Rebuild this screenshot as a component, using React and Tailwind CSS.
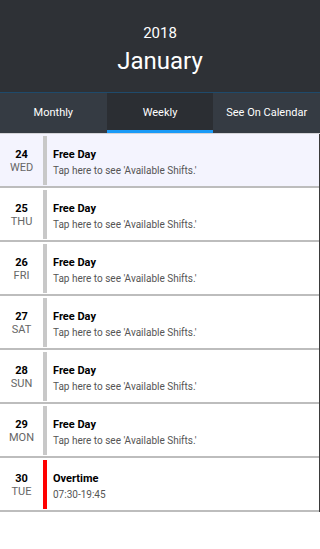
import React from "react";

const days = [
  { d: "24", w: "WED", title: "Free Day", sub: "Tap here to see 'Available Shifts.'", active: true },
  { d: "25", w: "THU", title: "Free Day", sub: "Tap here to see 'Available Shifts.'" },
  { d: "26", w: "FRI", title: "Free Day", sub: "Tap here to see 'Available Shifts.'" },
  { d: "27", w: "SAT", title: "Free Day", sub: "Tap here to see 'Available Shifts.'" },
  { d: "28", w: "SUN", title: "Free Day", sub: "Tap here to see 'Available Shifts.'" },
  { d: "29", w: "MON", title: "Free Day", sub: "Tap here to see 'Available Shifts.'" },
  { d: "30", w: "TUE", title: "Overtime", sub: "07:30-19:45", overtime: true },
];

const tabs = ["Monthly", "Weekly", "See On Calendar"];

export default function App() {
  return (
    <div className="w-[320px] h-[549px] bg-white overflow-hidden" style={{ fontFamily: "Roboto, 'Liberation Sans', sans-serif" }}>
      <div className="h-[92px] bg-[#2e3136] flex flex-col items-center pt-[23px] text-white">
        <div className="text-[15px] leading-[20px]">2018</div>
        <div className="text-[24px] leading-[30px] mt-[3px]">January</div>
      </div>
      <div className="h-px bg-[#1f4a6b]" />
      <div className="flex h-[40px] bg-[#353b43]">
        {tabs.map((t, i) => (
          <div
            key={t}
            className={
              i === 1
                ? "flex-1 flex items-center justify-center text-white text-[11px] bg-[#2b2e33] border-b-[3px] border-[#1a9af7] pt-[4px]"
                : "flex-1 flex items-center justify-center text-white text-[11px] pt-[1px]"
            }
          >
            {t}
          </div>
        ))}
      </div>
      <div className="h-px bg-[#d4d4d8]" />
      <div className="border-r border-[#3a3a3a]">
        {days.map((r) => (
          <div
            key={r.d}
            className={`flex h-[54px] border-b-2 border-[#bdbdbd] ${r.active ? "bg-[#f4f4fe]" : "bg-white"}`}
          >
            <div className="w-[43px] flex flex-col items-center justify-center pt-[2px]">
              <div className="text-[11px] font-bold text-black leading-[13px]">{r.d}</div>
              <div className="text-[11px] text-[#666] leading-[14px]">{r.w}</div>
            </div>
            <div className={`w-[4px] mt-[2px] mb-[1px] ${r.overtime ? "bg-[#ff0000]" : "bg-[#c8c8c8]"}`} />
            <div className="flex flex-col justify-center pl-[6px] pt-[5px]">
              <div className="text-[11px] font-bold text-black leading-[16px]">{r.title}</div>
              <div className="text-[10px] text-[#555] leading-[16px]">{r.sub}</div>
            </div>
          </div>
        ))}
      </div>
    </div>
  );
}
